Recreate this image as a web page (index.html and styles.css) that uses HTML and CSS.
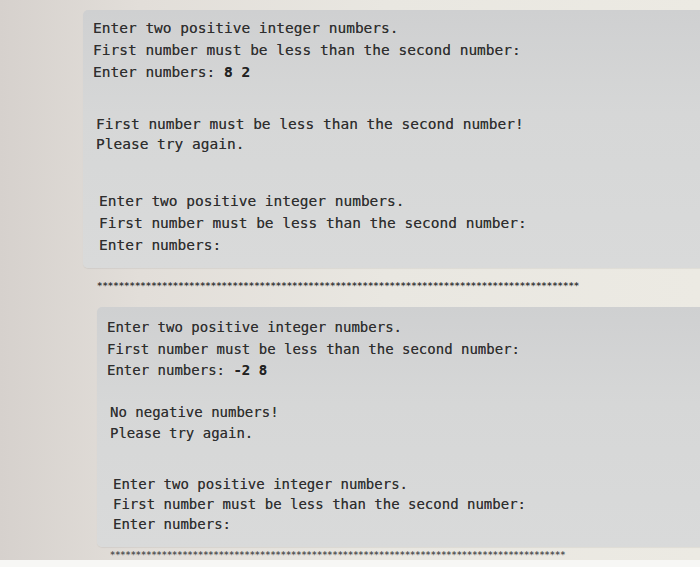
FILE: index.html
```html
<!DOCTYPE html>
<html>
<head>
<meta charset="utf-8">
<link rel="stylesheet" href="styles.css">
</head>
<body>
<div class="page">
  <div class="console console-one">
    <div class="group">
      <div>Enter two positive integer numbers.</div>
      <div>First number must be less than the second number:</div>
      <div>Enter numbers: <b>8 2</b></div>
    </div>
    <div class="group">
      <div>First number must be less than the second number!</div>
      <div>Please try again.</div>
    </div>
    <div class="group">
      <div>Enter two positive integer numbers.</div>
      <div>First number must be less than the second number:</div>
      <div>Enter numbers:</div>
    </div>
  </div>
  <div class="sep sep-one">*****************************************************************************************</div>
  <div class="console console-two">
    <div class="group">
      <div>Enter two positive integer numbers.</div>
      <div>First number must be less than the second number:</div>
      <div>Enter numbers: <b>-2 8</b></div>
    </div>
    <div class="group">
      <div>No negative numbers!</div>
      <div>Please try again.</div>
    </div>
    <div class="group">
      <div>Enter two positive integer numbers.</div>
      <div>First number must be less than the second number:</div>
      <div>Enter numbers:</div>
    </div>
  </div>
  <div class="sep sep-two">****************************************************************************************</div>
  <div class="edge"></div>
</div>
</body>
</html>
```
FILE: styles.css
```css
html, body {
  margin: 0;
  padding: 0;
}
body {
  width: 700px;
  height: 567px;
  overflow: hidden;
  background: linear-gradient(90deg, #d6d1cd 0%, #e2ded9 20%, #e9e7e1 55%, #eceae3 100%);
  font-family: "DejaVu Sans Mono", "Liberation Mono", monospace;
  color: #2e2e2e;
}
.page {
  display: flex;
  flex-direction: column;
  padding-top: 10px;
}
.console {
  background: linear-gradient(180deg, #cfd0d1 0%, #d6d7d7 40%, #d9dada 100%);
  border-radius: 5px 0 0 5px;
  box-shadow: 0 1px 1px rgba(0,0,0,0.06);
  text-shadow: 0 0 0.5px rgba(40,40,40,0.6);
}
.console b {
  font-weight: bold;
  color: #222;
}
.console-one {
  margin-left: 83px;
  height: 258px;
  box-sizing: border-box;
  padding: 7px 0 0 10px;
  font-size: 14.5px;
  line-height: 22px;
}
.console-one .group:nth-child(2) {
  margin-top: 31px;
  padding-left: 3px;
  line-height: 20px;
}
.console-one .group:nth-child(3) {
  margin-top: 36px;
  padding-left: 6px;
  line-height: 22px;
}
.sep {
  white-space: nowrap;
  overflow: hidden;
  letter-spacing: 0;
  font-weight: bold;
}
.sep-one {
  margin: 13px 0 0 97px;
  font-size: 9px;
  line-height: 10px;
  height: 10px;
  color: #3a3a3a;
}
.console-two {
  margin: 16px 0 0 97px;
  height: 240px;
  box-sizing: border-box;
  padding: 10px 0 0 10px;
  font-size: 14px;
  line-height: 21.5px;
}
.console-two .group:nth-child(2) {
  margin-top: 20px;
  padding-left: 3px;
}
.console-two .group:nth-child(3) {
  margin-top: 29px;
  padding-left: 6px;
  line-height: 20px;
}
.sep-two {
  margin: 3px 0 0 110px;
  font-size: 8.6px;
  line-height: 10px;
  height: 10px;
  color: #555;
}
.edge {
  height: 10px;
  background: #f7f7f5;
}
```
